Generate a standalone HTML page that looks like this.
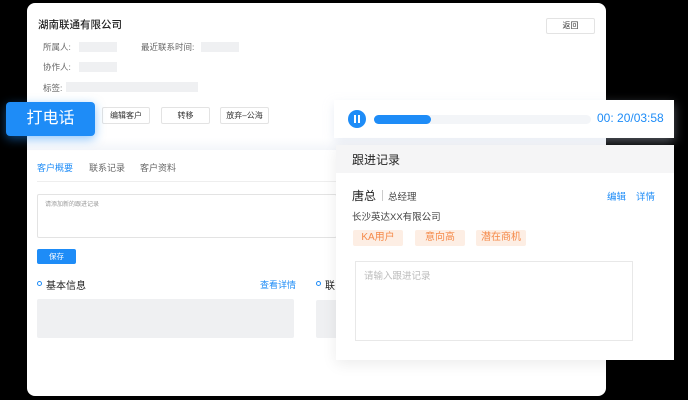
<!DOCTYPE html><html><head><meta charset="utf-8"><style>
*{margin:0;padding:0;box-sizing:border-box}
body{width:688px;height:400px;background:#000;position:relative;overflow:hidden;font-family:"Liberation Sans","Noto Sans CJK SC",sans-serif;color:#333}
.a{position:absolute}
.card{left:27px;top:3px;width:579px;height:393px;background:#fff;border-radius:8px}
.g{background:#eff0f2}
.btn{border:1px solid #e3e3e3;border-radius:2px;font-size:8px;color:#333;text-align:center;line-height:15px;height:17px;background:#fff}
.lbl{font-size:8.5px;color:#666}
.tag{background:#fdeee4;color:#f58a4a;font-size:10px;text-align:center;height:16px;line-height:16px;border-radius:2px}
</style></head><body>
<div class="a card"></div>
<div class="a" style="left:38px;top:17px;font-size:10.5px;color:#222;font-weight:500">湖南联通有限公司</div>
<div class="a btn" style="left:546px;top:18px;width:49px;height:16px;line-height:14px">返回</div>
<div class="a lbl" style="left:43px;top:41px">所属人:</div>
<div class="a g" style="left:79px;top:42px;width:38px;height:10px"></div>
<div class="a lbl" style="left:141px;top:41px">最近联系时间:</div>
<div class="a g" style="left:201px;top:42px;width:38px;height:10px"></div>
<div class="a lbl" style="left:43px;top:61px">协作人:</div>
<div class="a g" style="left:79px;top:62px;width:38px;height:10px"></div>
<div class="a lbl" style="left:43px;top:82px">标签:</div>
<div class="a g" style="left:66px;top:82px;width:132px;height:10px"></div>
<div class="a btn" style="left:102px;top:107px;width:48px">编辑客户</div>
<div class="a btn" style="left:161px;top:107px;width:49px">转移</div>
<div class="a btn" style="left:220px;top:107px;width:49px">放弃–公海</div>
<div class="a" style="left:27px;top:138px;width:579px;height:12px;background:linear-gradient(#fff,#f4f6fa)"></div>
<div class="a" style="left:6px;top:102px;width:89px;height:34px;background:#1e8cf7;border-radius:4px;color:#fff;font-size:16px;line-height:34px;text-align:center;box-shadow:0 3px 10px rgba(30,140,247,.5)">打电话</div>
<div class="a" style="left:37px;top:161px;font-size:9px;color:#1e8cf7">客户概要</div>
<div class="a" style="left:89px;top:161px;font-size:9px;color:#666">联系记录</div>
<div class="a" style="left:140px;top:161px;font-size:9px;color:#666">客户资料</div>
<div class="a" style="left:37px;top:181px;width:300px;height:1px;background:#eee"></div>
<div class="a" style="left:37px;top:194px;width:300px;height:44px;border:1px solid #e3e3e3;border-radius:2px"></div>
<div class="a" style="left:45px;top:199px;font-size:6px;color:#999">请添加新的跟进记录</div>
<div class="a" style="left:37px;top:249px;width:39px;height:15px;background:#1e8cf7;border-radius:2px;color:#fff;font-size:7.5px;text-align:center;line-height:15px">保存</div>
<div class="a" style="left:37px;top:281px;width:5px;height:5px;border:1.5px solid #1e8cf7;border-radius:50%"></div>
<div class="a" style="left:46px;top:277px;font-size:10px;color:#222">基本信息</div>
<div class="a" style="left:260px;top:278px;font-size:9px;color:#1e8cf7">查看详情</div>
<div class="a g" style="left:37px;top:299px;width:257px;height:39px;border-radius:2px"></div>
<div class="a" style="left:316px;top:281px;width:5px;height:5px;border:1.5px solid #1e8cf7;border-radius:50%"></div>
<div class="a" style="left:325px;top:277px;font-size:10px;color:#222">联</div>
<div class="a g" style="left:316px;top:300px;width:30px;height:38px;border-radius:2px"></div>
<div class="a" style="left:334px;top:100px;width:340px;height:38px;background:#fff;box-shadow:0 4px 10px rgba(200,210,230,.4)"></div>
<div class="a" style="left:348px;top:110px;width:18px;height:18px;border-radius:50%;background:#1e8cf7"></div>
<div class="a" style="left:354px;top:115px;width:2px;height:8px;background:#fff"></div>
<div class="a" style="left:358px;top:115px;width:2px;height:8px;background:#fff"></div>
<div class="a" style="left:374px;top:115px;width:217px;height:9px;border-radius:5px;background:#f3f5f8"></div>
<div class="a" style="left:374px;top:115px;width:57px;height:9px;border-radius:5px;background:#1e8cf7"></div>
<div class="a" style="left:597px;top:111px;font-size:12px;color:#1e8cf7">00:&nbsp;20/03:58</div>
<div class="a" style="left:336px;top:145px;width:338px;height:215px;background:#fff;box-shadow:0 4px 14px rgba(0,0,0,.08)"></div>
<div class="a" style="left:336px;top:145px;width:338px;height:28px;background:#f5f5f6"></div>
<div class="a" style="left:352px;top:151px;font-size:12px;color:#222">跟进记录</div>
<div class="a" style="left:352px;top:187px;font-size:12px;color:#222">唐总</div>
<div class="a" style="left:382px;top:190px;width:1px;height:11px;background:#ccc"></div>
<div class="a" style="left:388px;top:189px;font-size:9.5px;color:#444">总经理</div>
<div class="a" style="left:607px;top:189px;font-size:9.5px;color:#1e8cf7">编辑</div>
<div class="a" style="left:636px;top:189px;font-size:9.5px;color:#1e8cf7">详情</div>
<div class="a" style="left:352px;top:209px;font-size:9.5px;color:#444">长沙英达XX有限公司</div>
<div class="a tag" style="left:353px;top:230px;width:50px">KA用户</div>
<div class="a tag" style="left:415px;top:230px;width:50px">意向高</div>
<div class="a tag" style="left:476px;top:230px;width:50px">潜在商机</div>
<div class="a" style="left:355px;top:261px;width:278px;height:80px;border:1px solid #e8e8e8"></div>
<div class="a" style="left:364px;top:268px;font-size:9.5px;color:#bbb">请输入跟进记录</div>
</body></html>
